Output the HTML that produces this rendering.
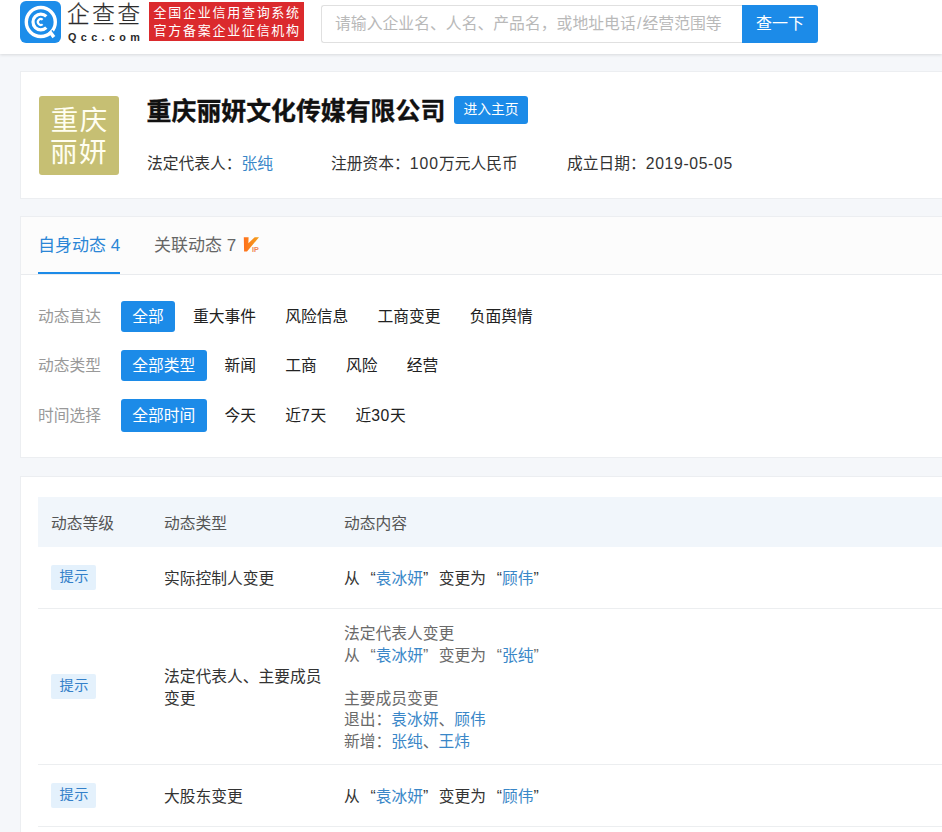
<!DOCTYPE html>
<html lang="zh-CN">
<head>
<meta charset="utf-8">
<title>重庆丽妍文化传媒有限公司 - 企查查</title>
<style>
*{box-sizing:border-box;margin:0;padding:0}
html,body{width:942px;height:832px;overflow:hidden}
body{background:#f5f7fa;font-family:"Liberation Sans","Noto Sans CJK SC",sans-serif;font-size:15.75px;color:#333;position:relative}
a{color:#3a87c8;text-decoration:none}
.hd{position:absolute;left:0;top:0;width:942px;height:54px;background:#fff;box-shadow:0 1px 3px rgba(0,0,0,.12)}
.logo{position:absolute;left:20px;top:1px;width:41px;height:42px;border-radius:6px;background:#1c8dea}
.brand{position:absolute;left:67px;top:-3px;-webkit-text-stroke:0.25px #2a2a2a;font-size:22.5px;font-weight:300;color:#2a2a2a;letter-spacing:2.8px;line-height:36px;white-space:nowrap}
.dom{position:absolute;left:68px;top:29px;font-size:10.8px;font-weight:700;color:#2a2a2a;letter-spacing:4.38px;line-height:16px;white-space:nowrap}
.badge{position:absolute;left:149px;top:2px;width:155px;height:39px;background:#db2a2d;color:#fff;font-size:13px;letter-spacing:1.72px;line-height:18px;padding:1.5px 0 0 4.6px;white-space:nowrap}
.sch{position:absolute;left:321px;top:5px;width:422px;height:38px;border:1px solid #e0e0e0;border-right:0;border-radius:3px 0 0 3px;background:#fff;color:#b9b9b9;font-size:15.83px;line-height:36px;padding-left:13px;white-space:nowrap}
.btn{position:absolute;left:742px;top:5px;width:76px;height:38px;background:#1c8be8;border-radius:0 3px 3px 0;color:#fff;font-size:16px;line-height:37px;text-align:center}
.card{position:absolute;left:20px;width:940px;background:#fff;border:1px solid #eceef1}
.c1{top:71px;height:128px}
.tile{position:absolute;left:18px;top:24px;width:80px;height:79px;background:#c6bf73;border:0;border-radius:3px;color:#fffef0;font-size:27.6px;letter-spacing:1.4px;text-indent:1.4px;line-height:31.5px;text-align:center;padding-top:9.4px}
.title{position:absolute;left:125.6px;top:21.3px;font-size:24.9px;font-weight:700;-webkit-text-stroke:0.35px #111;color:#111;line-height:36px;white-space:nowrap}
.home{position:absolute;left:433px;top:24px;width:74px;height:28px;background:#1c8be8;border-radius:3px;color:#fff;font-size:13.8px;line-height:27px;text-align:center}
.info{position:absolute;top:80px;line-height:24px;white-space:nowrap;color:#333}
.c2{top:216px;height:242px}
.tabs{position:absolute;left:0;top:0;width:100%;height:58px;background:#fcfcfc;border-bottom:1px solid #e9ebee}
.tab{position:absolute;top:16px;font-size:17px;line-height:26px;white-space:nowrap;color:#666}
.tab.on{color:#2b86d6}
.bar{position:absolute;left:17px;top:55px;width:82px;height:2px;background:#1c8be8}
.fr{position:absolute;left:17px;height:31px;line-height:31px;white-space:nowrap}
.fr .lb{display:inline-block;color:#999;width:83px}
.fr span.it{display:inline-block;padding:0 11.25px;margin-right:6.75px;border-radius:3px;color:#222}
.fr span.on{background:#1c8be8;color:#fff}
.c3{top:476px;height:400px}
.th{position:absolute;left:17px;top:20px;width:930px;height:50px;background:#f1f6fb;color:#666}
.cell{position:absolute;white-space:nowrap;line-height:21.5px}
.line{position:absolute;left:17px;width:930px;height:1px;background:#eceef0}
.tag{position:absolute;left:30px;width:45px;height:25px;background:#e4f1fc;border-radius:2px;color:#3380c9;font-size:14.2px;letter-spacing:.4px;padding-left:1.4px;line-height:23px;text-align:center}
.g{color:#6a6a6a}
.h{color:#555}
.n{letter-spacing:.65px}
.ws{word-spacing:6.3px}
</style>
</head>
<body>
<div class="hd">
  <div class="logo">
    <svg width="41" height="42" viewBox="0 0 41 42">
      <circle cx="20.8" cy="21" r="14.5" fill="none" stroke="#fff" stroke-width="3.4"/>
      <path d="M26.32 15.48 A7.8 7.8 0 1 0 26.32 26.52" fill="none" stroke="#fff" stroke-width="3.2"/>
      <path d="M22.66 18.78 A2.9 2.9 0 1 0 22.66 23.22" fill="none" stroke="#fff" stroke-width="2.2"/>
      <path d="M31.6 29.6 L35.8 35.2" stroke="#1c8dea" stroke-width="2.4"/>
      <path d="M29.7 30.5 L33.9 36.1" stroke="#fff" stroke-width="3.5"/>
    </svg>
  </div>
  <div class="brand">企查查</div>
  <div class="dom">Qcc.com</div>
  <div class="badge">全国企业信用查询系统<br>官方备案企业征信机构</div>
  <div class="sch">请输入企业名、人名、产品名，或地址电话<span style="padding:0 1.2px">/</span>经营范围等</div>
  <div class="btn">查一下</div>
</div>

<div class="card c1">
  <div class="tile">重庆<br>丽妍</div>
  <div class="title">重庆丽妍文化传媒有限公司</div>
  <div class="home">进入主页</div>
  <div class="info" style="left:126px">法定代表人：<a>张纯</a></div>
  <div class="info" style="left:310px">注册资本：<span class="n" style="letter-spacing:.95px">100</span>万元人民币</div>
  <div class="info" style="left:546px">成立日期：<span class="n">2019-05-05</span></div>
</div>

<div class="card c2">
  <div class="tabs">
    <div class="tab on" style="left:17px">自身动态 4</div>
    <div class="tab" style="left:133px">关联动态 7</div>
    <svg style="position:absolute;left:219px;top:14px" width="24" height="24" viewBox="240 231 24 24">
      <defs><linearGradient id="vg" x1="0" y1="0" x2="1" y2="0"><stop offset="0" stop-color="#ff701c"/><stop offset="1" stop-color="#f2a11c"/></linearGradient></defs>
      <path d="M243.8 237.2 L248.6 237.2 L248.35 243.3 L254.7 237.3 L259 237.3 L247 251.5 L244.1 251.5 Z" fill="url(#vg)"/>
      <text x="252" y="251.5" font-family="Liberation Sans, sans-serif" font-size="7.2" font-weight="700" fill="#f08450">IP</text>
    </svg>
    <div class="bar"></div>
  </div>
  <div class="fr" style="top:84px"><span class="lb">动态直达</span><span class="it on">全部</span><span class="it">重大事件</span><span class="it">风险信息</span><span class="it">工商变更</span><span class="it">负面舆情</span></div>
  <div class="fr" style="top:133px"><span class="lb">动态类型</span><span class="it on">全部类型</span><span class="it">新闻</span><span class="it">工商</span><span class="it">风险</span><span class="it">经营</span></div>
  <div class="fr" style="top:182px;height:32px;line-height:33px"><span class="lb">时间选择</span><span class="it on">全部时间</span><span class="it">今天</span><span class="it">近<span class="n">7</span>天</span><span class="it">近<span class="n">30</span>天</span></div>
</div>

<div class="card c3">
  <div class="th"></div>
  <div class="cell h" style="left:30px;top:36px">动态等级</div>
  <div class="cell h" style="left:143px;top:36px">动态类型</div>
  <div class="cell h" style="left:323px;top:36px">动态内容</div>

  <div class="tag" style="top:88px">提示</div>
  <div class="cell" style="left:143px;top:91px">实际控制人变更</div>
  <div class="cell ws" style="left:323px;top:91px">从 “<a>袁冰妍</a>” 变更为 “<a>顾伟</a>”</div>
  <div class="line" style="top:131px"></div>

  <div class="tag" style="top:197px">提示</div>
  <div class="cell" style="left:143px;top:189px">法定代表人、主要成员<br>变更</div>
  <div class="cell g ws" style="left:323px;top:146px">法定代表人变更<br>从 “<a>袁冰妍</a>” 变更为 “<a>张纯</a>”<br><br>主要成员变更<br>退出：<a>袁冰妍</a>、<a>顾伟</a><br>新增：<a>张纯</a>、<a>王炜</a></div>
  <div class="line" style="top:287px"></div>

  <div class="tag" style="top:306px">提示</div>
  <div class="cell" style="left:143px;top:309px">大股东变更</div>
  <div class="cell ws" style="left:323px;top:309px">从 “<a>袁冰妍</a>” 变更为 “<a>顾伟</a>”</div>
  <div class="line" style="top:349px"></div>
</div>
</body>
</html>
